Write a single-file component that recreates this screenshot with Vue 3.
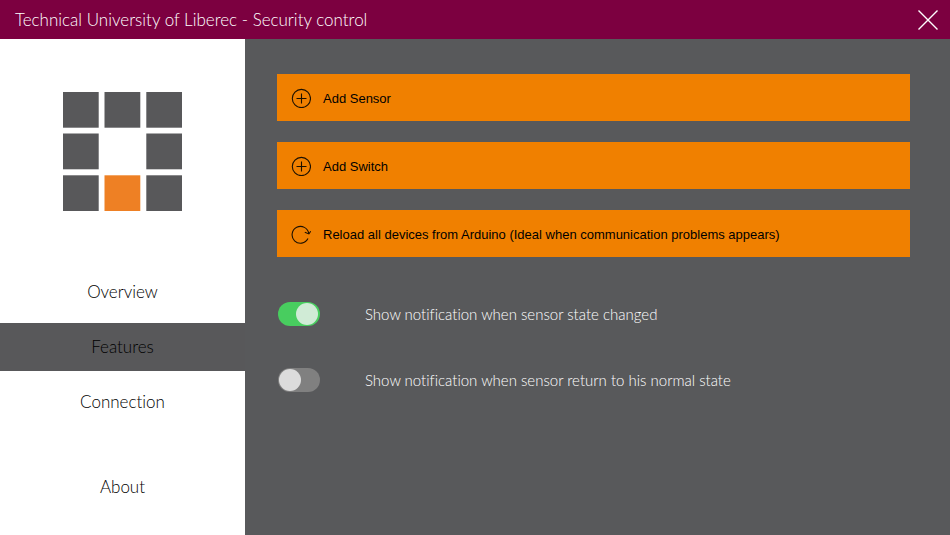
<script setup>
import { ref } from 'vue'

const pages = ['Overview', 'Features', 'Connection', 'About']
const current = ref('Features')

const actions = [
  { label: 'Add Sensor', icon: 'add' },
  { label: 'Add Switch', icon: 'add' },
  { label: 'Reload all devices from Arduino (Ideal when communication problems appears)', icon: 'reload' },
]

const settings = ref([
  { id: 'notify-change', label: 'Show notification when sensor state changed', on: true },
  { id: 'notify-normal', label: 'Show notification when sensor return to his normal state', on: false },
])
</script>

<template>
  <div class="window">
    <header class="titlebar">
      <h1 class="title">Technical University of Liberec - Security control</h1>
      <button class="close" type="button" aria-label="Close">
        <svg width="20" height="20" viewBox="0 0 20 20" aria-hidden="true">
          <path d="M0.5 0.5 L19.5 19.5 M19.5 0.5 L0.5 19.5" />
        </svg>
      </button>
    </header>

    <div class="body">
      <aside class="sidebar">
        <svg class="logo" viewBox="0 0 119 119" aria-hidden="true">
          <g fill="#58585a">
            <rect x="0" y="0" width="35.7" height="35.7" />
            <rect x="41.5" y="0" width="35.8" height="35.7" />
            <rect x="83.3" y="0" width="35.7" height="35.7" />
            <rect x="0" y="41.5" width="35.7" height="35.8" />
            <rect x="83.3" y="41.5" width="35.7" height="35.8" />
            <rect x="0" y="83.3" width="35.7" height="35.7" />
            <rect x="83.3" y="83.3" width="35.7" height="35.7" />
          </g>
          <rect x="41.5" y="83.3" width="35.8" height="35.7" fill="#ee8024" />
        </svg>
        <nav class="nav">
          <a
            v-for="page in pages"
            :key="page"
            href="#"
            class="nav-item"
            :class="{ active: page === current }"
            @click.prevent="current = page"
          >{{ page }}</a>
        </nav>
      </aside>

      <main class="content">
        <div class="actions">
          <button v-for="action in actions" :key="action.label" class="action" type="button">
            <svg class="action-icon" viewBox="0 0 20 20" aria-hidden="true">
              <template v-if="action.icon === 'add'">
                <circle cx="10.4" cy="10.5" r="9.1" />
                <path d="M10.5 5.5 V15.5 M5.5 10.5 H15.5" />
              </template>
              <template v-else>
                <path d="M17 14.6 A8.4 8.4 0 1 1 17.8 9.6" />
                <path d="M13.8 8.2 L17.9 9.9 L19.8 7.2" />
              </template>
            </svg>
            <span>{{ action.label }}</span>
          </button>
        </div>

        <div class="settings">
          <div v-for="item in settings" :key="item.id" class="setting">
            <input :id="item.id" v-model="item.on" class="switch" type="checkbox" role="switch" />
            <label :for="item.id">{{ item.label }}</label>
          </div>
        </div>
      </main>
    </div>
  </div>
</template>

<style>
body {
  margin: 0;
  background: #58595b;
}
</style>

<style scoped>
.window {
  display: flex;
  flex-direction: column;
  min-height: 100vh;
  font-family: "Century Gothic", Lato, sans-serif;
  font-weight: 300;
  font-variant-ligatures: none;
  color: #000;
}

.titlebar {
  display: flex;
  align-items: center;
  justify-content: space-between;
  height: 39px;
  padding: 0 12px 0 15px;
  background: #7c0040;
  color: #fff;
}

.title {
  margin: 0;
  font-size: 17px;
  font-weight: 300;
  line-height: 20px;
}

.close {
  display: flex;
  padding: 0;
  border: 0;
  background: none;
  cursor: pointer;
}

.close path {
  fill: none;
  stroke: #fff;
  stroke-width: 1.4;
}

.body {
  display: flex;
  flex: 1;
}

.sidebar {
  display: flex;
  flex-direction: column;
  align-items: center;
  width: 245px;
  flex-shrink: 0;
  padding: 53px 0 24px;
  box-sizing: border-box;
  background: #fff;
}

.logo {
  width: 119px;
  height: 119px;
}

.nav {
  display: flex;
  flex: 1;
  flex-direction: column;
  gap: 7px;
  width: 100%;
  margin-top: 57px;
}

.nav-item {
  font-size: 17px;
  line-height: 48px;
  text-align: center;
  text-decoration: none;
  color: #000;
}

.nav-item.active {
  background: #58585a;
}

.nav-item:last-child {
  margin-top: auto;
}

.content {
  flex: 1;
  min-width: 0;
  padding: 35px 40px 32px 32px;
  background: #58595b;
}

.actions {
  display: grid;
  gap: 21px;
}

.action {
  display: flex;
  align-items: center;
  gap: 12px;
  height: 47px;
  padding: 1px 14px 0;
  border: 0;
  background: #f08000;
  color: #000;
  font-family: "Liberation Sans", Arial, sans-serif;
  font-size: 13px;
  text-align: left;
  cursor: pointer;
}

.action-icon {
  width: 20px;
  height: 20px;
  flex-shrink: 0;
  fill: none;
  stroke: #1c1000;
  stroke-width: 1.1;
}

.settings {
  display: grid;
  gap: 42px;
  margin-top: 45px;
  padding-left: 1px;
}

.setting {
  display: flex;
  align-items: center;
  gap: 45px;
  color: #fff;
  font-size: 15px;
  line-height: 24px;
}

.switch {
  display: flex;
  align-items: center;
  appearance: none;
  box-sizing: border-box;
  width: 42px;
  height: 24px;
  flex-shrink: 0;
  margin: 0;
  padding: 0 2px 0 1px;
  border-radius: 12px;
  background: #808080;
  cursor: pointer;
}

.switch::before {
  content: "";
  width: 22px;
  height: 22px;
  border-radius: 50%;
  background: #dcdcdc;
}

.switch:checked {
  justify-content: flex-end;
  background: #48cd5f;
}

.switch:checked::before {
  background: #d0ebd6;
}
</style>
